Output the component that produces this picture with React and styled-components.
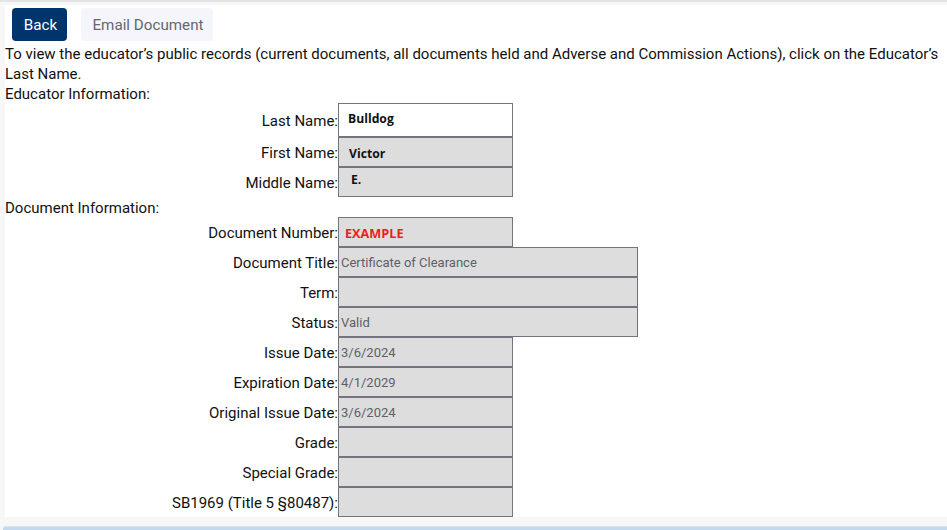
import React from "react";
import styled, { createGlobalStyle } from "styled-components";

const GlobalStyle = createGlobalStyle`
  html, body {
    margin: 0;
    padding: 0;
    background: #f7f7f7;
    overflow: hidden;
  }
  body {
    font-family: Roboto, "Liberation Sans", sans-serif;
    color: #111;
  }
`;

const Page = styled.div`
  width: 947px;
  height: 530px;
  display: flex;
  flex-direction: column;
  background: linear-gradient(#e4e4e4 0, #e4e4e4 2px, #f7f7f7 2px, #f7f7f7 100%);
  padding-top: 5px;
  box-sizing: border-box;
`;

const Card = styled.main`
  height: 512px;
  flex: none;
  margin-left: 5px;
  background: #fff;
  box-sizing: border-box;
  font-size: 15px;
  line-height: 20px;
`;

const Toolbar = styled.div`
  display: flex;
  gap: 14px;
  padding: 3px 0 0 7px;
  height: 36px;
`;

const Button = styled.button`
  width: ${(p) => p.$w}px;
  height: 33px;
  padding: 0 0 0 2px;
  border: 0;
  border-radius: 4px;
  font: 15.2px Roboto, sans-serif;
  background: ${(p) => (p.$primary ? "#00356b" : "#f5f5fc")};
  color: ${(p) => (p.$primary ? "#fff" : "#66666c")};
`;

const Para = styled.p`
  margin: 0;
`;

const Section = styled.div`
  display: grid;
  grid-template-columns: 333px max-content;
  margin: -1px 0 1px;
`;

const Label = styled.div`
  height: ${(p) => p.$h || 30}px;
  line-height: ${(p) => (p.$h || 30) + 2}px;
  text-align: right;
  white-space: nowrap;
`;

const Field = styled.div`
  width: ${(p) => (p.$wide ? 300 : 175)}px;
  height: ${(p) => p.$h || 30}px;
  box-sizing: border-box;
  border: 1px solid #74747e;
  background: ${(p) => (p.$white ? "#fff" : "#dddddd")};
  color: #5f5f68;
  font-size: 13px;
  line-height: 30px;
  padding-left: 2px;
  white-space: nowrap;
`;

const ScanText = styled.span`
  display: block;
  font-family: "Open Sans", "Noto Sans", sans-serif;
  font-weight: 700;
  font-size: ${(p) => p.$size || 12.2}px;
  color: ${(p) => p.$color || "#111"};
  padding-left: ${(p) => p.$x}px;
  line-height: ${(p) => p.$lh}px;
`;

const BottomBar = styled.div`
  margin: 9px 0 0 3px;
  flex: 1;
  border-top: 1px solid #d6e6e6;
  border-radius: 3px 0 0 0;
  background: #c3d9ee;
`;

const documentRows = [
  ["Document Title", "Certificate of Clearance", true],
  ["Term", "", true],
  ["Status", "Valid", true],
  ["Issue Date", "3/6/2024"],
  ["Expiration Date", "4/1/2029"],
  ["Original Issue Date", "3/6/2024"],
  ["Grade", ""],
  ["Special Grade", ""],
  ["SB1969 (Title 5 §80487)", ""],
];

export default function App() {
  return (
    <Page>
      <GlobalStyle />
      <Card>
        <Toolbar>
          <Button $primary $w={55}>Back</Button>
          <Button $w={132}>Email Document</Button>
        </Toolbar>
        <Para>
          To view the educator’s public records (current documents, all documents held and Adverse and Commission
          Actions), click on the Educator’s Last Name.
        </Para>
        <Para>Educator Information:</Para>
        <Section>
          <Label $h={34}>Last Name:</Label>
          <Field $white $h={34}>
            <ScanText $x={7} $lh={30}>Bulldog</ScanText>
          </Field>
          <Label>First Name:</Label>
          <Field>
            <ScanText $x={8} $lh={32}>Victor</ScanText>
          </Field>
          <Label>Middle Name:</Label>
          <Field>
            <ScanText $x={10} $lh={24}>E.</ScanText>
          </Field>
        </Section>
        <Para>Document Information:</Para>
        <Section>
          <Label>Document Number:</Label>
          <Field>
            <ScanText $x={4} $lh={30} $size={12.7} $color="#ed1c24">EXAMPLE</ScanText>
          </Field>
          {documentRows.map(([label, value, wide]) => (
            <React.Fragment key={label}>
              <Label>{label}:</Label>
              <Field $wide={wide}>{value}</Field>
            </React.Fragment>
          ))}
        </Section>
      </Card>
      <BottomBar />
    </Page>
  );
}
